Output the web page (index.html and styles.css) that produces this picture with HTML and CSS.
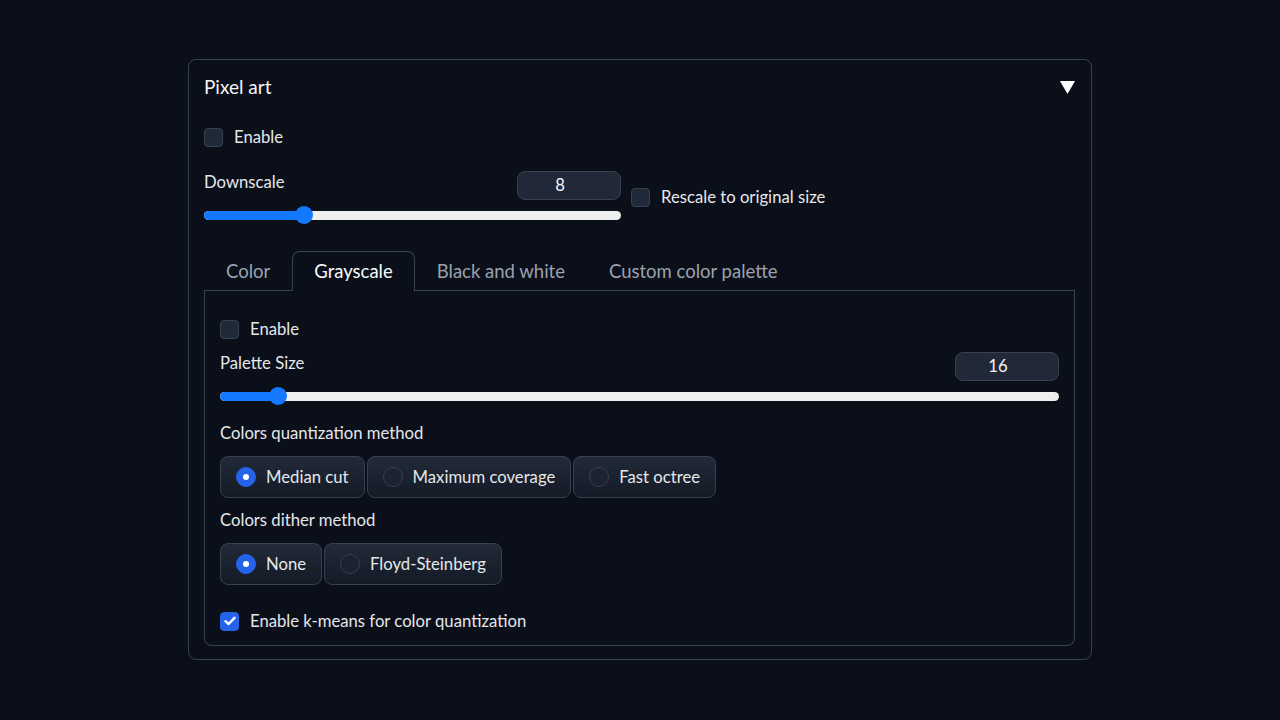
FILE: index.html
```html
<!doctype html>
<html lang="en">

<head>
    <meta charset="UTF-8" />
    <meta name="viewport" content="width=device-width, initial-scale=1.0" />
    <title>Pixel art</title>
    <link rel="stylesheet" href="styles.css">
</head>

<body>
    <div class="page">
        <div class="accordion">
            <div class="accordion-head">
                <span class="accordion-title">Pixel art</span>
                <svg class="caret" width="15" height="13" viewBox="0 0 15 13">
                    <polygon points="0,0 15,0 7.5,13" fill="#ffffff"></polygon>
                </svg>
            </div>

            <div class="accordion-body">
                <label class="check">
                    <span class="box"></span>
                    <span>Enable</span>
                </label>

                <div class="slider-row">
                    <div class="slider-block slider-block-small">
                        <div class="slider-head">
                            <span class="label">Downscale</span>
                            <span class="number">8</span>
                        </div>
                        <div class="slider">
                            <div class="track">
                                <div class="fill" style="width: 24%"></div>
                            </div>
                            <span class="thumb" style="left: calc(24% - 9px)"></span>
                        </div>
                    </div>
                    <label class="check">
                        <span class="box"></span>
                        <span>Rescale to original size</span>
                    </label>
                </div>

                <div class="tabs">
                    <div class="tab-nav">
                        <span class="tab">Color</span>
                        <span class="tab tab-selected">Grayscale</span>
                        <span class="tab">Black and white</span>
                        <span class="tab">Custom color palette</span>
                    </div>

                    <div class="tab-panel">
                        <label class="check">
                            <span class="box"></span>
                            <span>Enable</span>
                        </label>

                        <div class="slider-block">
                            <div class="slider-head">
                                <span class="label">Palette Size</span>
                                <span class="number">16</span>
                            </div>
                            <div class="slider">
                                <div class="track">
                                    <div class="fill" style="width: 6.9%"></div>
                                </div>
                                <span class="thumb" style="left: calc(6.9% - 9px)"></span>
                            </div>
                        </div>

                        <div class="radio-field">
                            <span class="label">Colors quantization method</span>
                            <div class="radio-group">
                                <label class="radio radio-selected"><span class="dot"></span>Median cut</label>
                                <label class="radio"><span class="dot"></span>Maximum coverage</label>
                                <label class="radio"><span class="dot"></span>Fast octree</label>
                            </div>
                        </div>

                        <div class="radio-field">
                            <span class="label">Colors dither method</span>
                            <div class="radio-group">
                                <label class="radio radio-selected"><span class="dot"></span>None</label>
                                <label class="radio"><span class="dot"></span>Floyd-Steinberg</label>
                            </div>
                        </div>

                        <label class="check check-last">
                            <span class="box box-checked">
                                <svg width="12" height="10" viewBox="0 0 12 10" fill="none" stroke="#ffffff"
                                    stroke-width="2.4" stroke-linecap="round" stroke-linejoin="round">
                                    <polyline points="1.5 5.2 4.6 8 10.5 1.8"></polyline>
                                </svg>
                            </span>
                            <span>Enable k-means for color quantization</span>
                        </label>
                    </div>
                </div>
            </div>
        </div>
    </div>
</body>

</html>
```

FILE: styles.css
```css
:root {
    --bg: #0b0f19;
    --border: #374151;
    --input-bg: #1f2937;
    --text: #e5e7eb;
    --text-muted: #9ca3af;
    --accent: #2563eb;
    --slider: #1479ff;
}

* {
    box-sizing: border-box;
    margin: 0;
    padding: 0;
}

body {
    font-family: Lato, "Noto Sans", sans-serif;
    font-size: 16.7px;
    line-height: 24px;
    background-color: var(--bg);
    color: var(--text);
}

.page {
    width: 904px;
    margin: 59px auto 0;
}

.accordion {
    border: 1px solid var(--border);
    border-radius: 8px;
    padding: 15px 16px 13px 15px;
}

.accordion-head {
    display: flex;
    justify-content: space-between;
    align-items: center;
    height: 24px;
}

.accordion-title {
    font-size: 19px;
    color: #f3f4f6;
}

.caret {
    display: block;
}

.accordion-body {
    display: flex;
    flex-direction: column;
    padding-top: 26px;
}

.check {
    display: flex;
    align-items: center;
    gap: 11px;
    height: 24px;
}

.box {
    width: 19px;
    height: 19px;
    border-radius: 4px;
    border: 1px solid var(--border);
    background-color: var(--input-bg);
    display: flex;
    align-items: center;
    justify-content: center;
    flex-shrink: 0;
}

.box-checked {
    background-color: var(--accent);
    border-color: var(--accent);
}

.slider-row {
    display: flex;
    align-items: center;
    gap: 10px;
    margin-top: 21px;
}

.slider-block-small {
    width: 417px;
}

.slider-head {
    display: flex;
    justify-content: space-between;
    align-items: flex-start;
}

.number {
    width: 104px;
    height: 29px;
    line-height: 27px;
    text-align: center;
    padding-right: 18px;
    border: 1px solid var(--border);
    border-radius: 8px;
    background-color: #212938;
    color: #f3f4f6;
    margin-top: 1px;
}

.slider {
    position: relative;
    height: 18px;
    display: flex;
    align-items: center;
    margin-top: 6px;
}

.track {
    width: 100%;
    height: 9px;
    border-radius: 5px;
    background-color: #efefef;
    overflow: hidden;
}

.fill {
    height: 100%;
    background-color: var(--slider);
}

.thumb {
    position: absolute;
    top: 0;
    width: 18px;
    height: 18px;
    border-radius: 50%;
    background-color: var(--slider);
}

.tabs {
    margin-top: 27px;
}

.tab-nav {
    display: flex;
    border-bottom: 1px solid var(--border);
}

.tab {
    padding: 0 21px;
    height: 39px;
    line-height: 39px;
    font-size: 18.5px;
    color: var(--text-muted);
    border: 1px solid transparent;
    border-bottom: none;
}

.tab-selected {
    color: #f9fafb;
    border-color: var(--border);
    border-radius: 8px 8px 0 0;
    background-color: var(--bg);
    height: 40px;
    margin-bottom: -1px;
}

.tab-panel {
    border: 1px solid var(--border);
    border-top: none;
    border-radius: 0 0 8px 8px;
    padding: 26px 15px 12px;
    display: flex;
    flex-direction: column;
}

.tab-panel .slider-block {
    margin-top: 10px;
}

.radio-field {
    display: flex;
    flex-direction: column;
    gap: 11px;
    margin-top: 16px;
}

.radio-field + .radio-field {
    margin-top: 10px;
}

.radio-group {
    display: flex;
    gap: 2px;
}

.radio {
    display: flex;
    align-items: center;
    gap: 10px;
    height: 42px;
    padding: 0 15px;
    border: 1px solid var(--border);
    border-radius: 8px;
    background: linear-gradient(to bottom, #222a38, #141a26);
}

.dot {
    width: 20px;
    height: 20px;
    border-radius: 50%;
    border: 1px solid var(--border);
    background-color: #1b2230;
    flex-shrink: 0;
}

.radio-selected .dot {
    background-color: var(--accent);
    border-color: var(--accent);
    box-shadow: inset 0 0 0 6px var(--accent);
    background-image: radial-gradient(circle, #ffffff 0 4px, transparent 4.5px);
}

.check-last {
    margin-top: 24px;
}
```
